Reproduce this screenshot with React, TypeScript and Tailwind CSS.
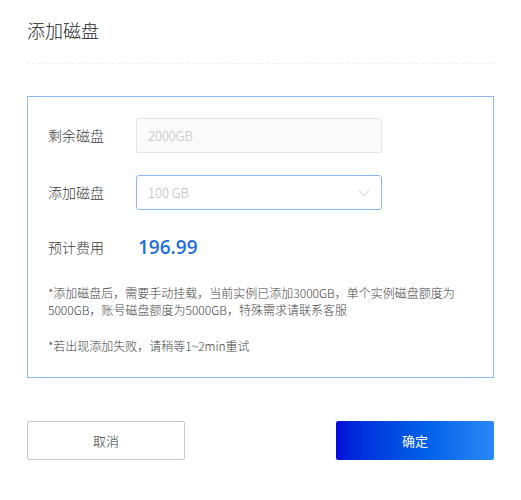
export default function App() {
  const font = { fontFamily: '"Noto Sans CJK SC", "Noto Sans", sans-serif' };
  return (
    <div className="w-[521px] h-[500px] bg-white px-[27px]" style={font}>
      <div className="pt-[17px] text-[18px] leading-[26px] font-light text-[#222]">添加磁盘</div>
      <div className="mt-[20px] border-t border-dashed border-[#eeeeee]" />

      <div className="mt-[32px] border border-[#8fb8ee] px-[20px] pt-[21px] pb-[23px] text-[#3a3a3a]">
        <div className="flex items-center">
          <div className="w-[88px] text-[14px] font-light">剩余磁盘</div>
          <div className="w-[246px] h-[35px] rounded-[2px] border border-[#e6e6e6] bg-[#fafafa] flex items-center px-[11px] text-[13px] font-light text-[#c4c4c4]">
            2000GB
          </div>
        </div>

        <div className="flex items-center mt-[22px]">
          <div className="w-[88px] text-[14px] font-light">添加磁盘</div>
          <div className="w-[246px] h-[35px] rounded-[3px] border border-[#8db8ef] bg-white flex items-center justify-between px-[11px] text-[13px] font-light text-[#bdbdbd]">
            <span>100 GB</span>
            <svg width="12" height="8" viewBox="0 0 12 8" fill="none" stroke="#c8c8c8" strokeWidth="1">
              <path d="M1 1.5 L6 6.5 L11 1.5" />
            </svg>
          </div>
        </div>

        <div className="flex items-center mt-[24px] h-[26px]">
          <div className="w-[90px] text-[14px] font-light">预计费用</div>
          <div className="text-[19px] font-semibold text-[#1e6fdc]" style={{ fontFamily: '"Open Sans", "Noto Sans", sans-serif' }}>
            196.99
          </div>
        </div>

        <div className="mt-[24px] text-[12px] leading-[17px] font-light text-[#444]">
          <p>*添加磁盘后，需要手动挂载，当前实例已添加3000GB，单个实例磁盘额度为5000GB，账号磁盘额度为5000GB，特殊需求请联系客服</p>
          <p className="mt-[19px]">*若出现添加失败，请稍等1~2min重试</p>
        </div>
      </div>

      <div className="mt-[43px] flex justify-between">
        <button className="w-[158px] h-[39px] rounded-[2px] border border-[#c8c8c8] bg-white text-[13px] font-light text-[#333]">
          取消
        </button>
        <button className="w-[158px] h-[39px] rounded-[2px] bg-gradient-to-r from-[#0909d6] to-[#2a88f6] text-[13px] text-white">
          确定
        </button>
      </div>
    </div>
  );
}
